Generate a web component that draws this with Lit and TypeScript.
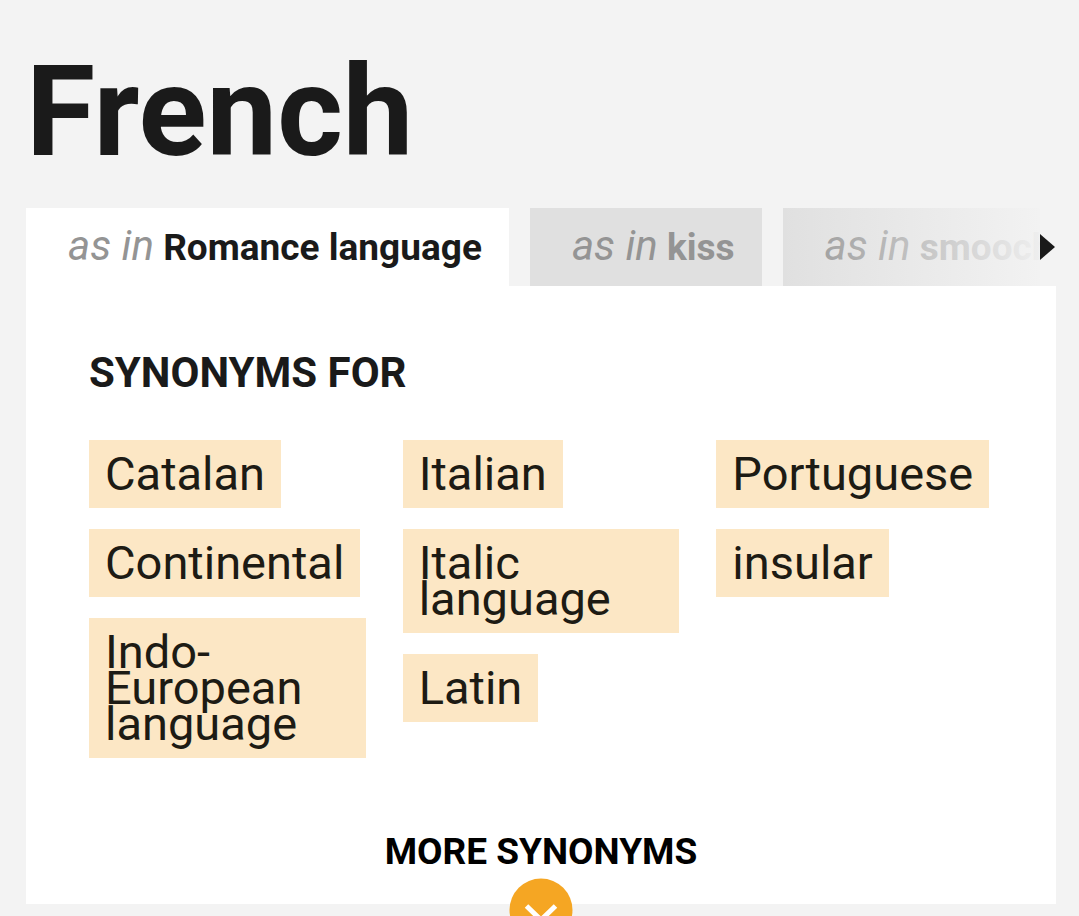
import { LitElement, html, css } from "lit";
import { customElement, state } from "lit/decorators.js";

@customElement("app-root")
export class AppRoot extends LitElement {
  @state() private selected = 0;

  private senses = ["Romance language", "kiss", "smooch"];
  private columns = [
    ["Catalan", "Continental", "Indo-European language"],
    ["Italian", "Italic language", "Latin"],
    ["Portuguese", "insular"],
  ];

  static styles = css`
    :host {
      display: block;
      box-sizing: border-box;
      height: 100vh;
      overflow: hidden;
      padding: 32px 23px 0 26px;
      background: #f3f3f3;
      color: #1a1a1a;
      font-family: Roboto, sans-serif;
    }
    * { box-sizing: border-box; }
    h1 {
      margin: 0 0 16px;
      font-size: 126px;
      line-height: 160px;
      font-weight: 700;
    }
    .tabbar { position: relative; }
    .tabs {
      display: flex;
      gap: 21px;
      height: 78px;
      overflow: hidden;
    }
    .tab {
      flex: none;
      border: 0;
      padding: 0 27px 2px 42px;
      background: #e0e0e0;
      color: #949494;
      font: 700 37px/76px Roboto, sans-serif;
      white-space: nowrap;
    }
    .tab em { font-weight: 400; font-size: 42px; color: #949494; }
    .tab.active { background: #fff; color: #1a1a1a; }
    .next {
      position: absolute;
      top: 0;
      right: 0;
      width: 274px;
      height: 78px;
      border: 0;
      padding: 0;
      display: flex;
      align-items: center;
      justify-content: flex-end;
      background: linear-gradient(to right, rgba(243, 243, 243, 0), rgba(243, 243, 243, 0.95) 94%, #f3f3f3 94%);
    }
    .card {
      display: flow-root;
      background: #fff;
      padding: 63px 63px 0;
    }
    h2 {
      margin: 0 0 43px;
      font-size: 42px;
      line-height: 48px;
      font-weight: 700;
    }
    .columns { display: grid; grid-template-columns: repeat(3, 1fr); gap: 37px; }
    .column {
      display: flex;
      flex-direction: column;
      align-items: flex-start;
      gap: 21px;
      margin: 0;
      padding: 0;
      list-style: none;
    }
    .word {
      display: block;
      padding: 16px;
      background: #fce7c5;
      color: #1d1b14;
      font-size: 47px;
      line-height: 36px;
      text-decoration: none;
    }
    .more {
      position: relative;
      width: 100%;
      margin: 72px 0 -38px;
      border: 0;
      padding: 0;
      display: flex;
      flex-direction: column;
      align-items: center;
      gap: 4px;
      background: none;
      color: #000;
      font: 700 37px/44px Roboto, sans-serif;
    }
  `;

  render() {
    return html`
      <h1>French</h1>
      <div class="tabbar">
        <div class="tabs" role="tablist">
          ${this.senses.map(
            (s, i) => html`<button
              class="tab ${i === this.selected ? "active" : ""}"
              role="tab"
              aria-selected=${i === this.selected}
              @click=${() => (this.selected = i)}
            ><em>as in</em> ${s}</button>`
          )}
        </div>
        <button class="next" aria-label="Next meanings">
          <svg width="16" height="28" viewBox="0 0 16 28"><path d="M0 1L15 14L0 27Z" fill="#1a1a1a" /></svg>
        </button>
      </div>
      <main class="card">
        <h2>SYNONYMS FOR</h2>
        <div class="columns">
          ${this.columns.map(
            (c) => html`<ul class="column">
              ${c.map((w) => html`<li><a class="word" href="#">${w}</a></li>`)}
            </ul>`
          )}
        </div>
        <button class="more">
          MORE SYNONYMS
          <svg width="64" height="64" viewBox="0 0 64 64">
            <circle cx="32" cy="32" r="31.5" fill="#f5a623" />
            <path d="M17.5 28L32 42L46.500 28" fill="none" stroke="#fff" stroke-width="5" />
          </svg>
        </button>
      </main>
    `;
  }
}
